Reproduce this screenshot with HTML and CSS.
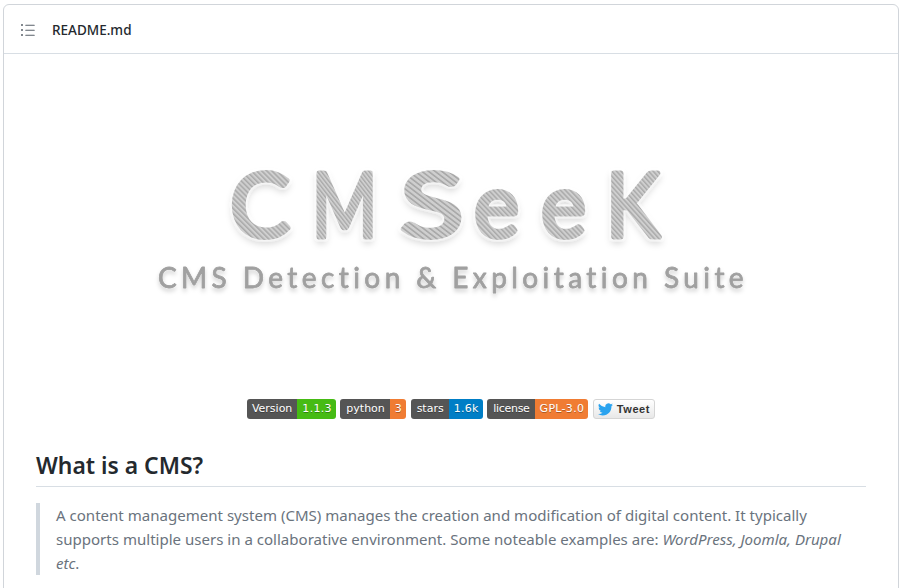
FILE: index.html
```html
<!DOCTYPE html>
<html lang="en">
<head>
<meta charset="utf-8">
<title>README.md</title>
<link rel="stylesheet" href="styles.css">
</head>
<body>
<div class="card">
  <header class="card-head">
    <svg class="list-icon" width="16" height="16" viewBox="0 0 16 16"><path d="M2 4a1 1 0 100-2 1 1 0 000 2zm3.750-1.250a.500.500 0 000 1h8.500a.500.500 0 000-1h-8.500zm0 5a.500.500 0 000 1h8.500a.500.500 0 000-1h-8.500zm0 5a.500.500 0 000 1h8.500a.500.500 0 000-1h-8.500zM3 8a1 1 0 11-2 0 1 1 0 012 0zm-1 6a1 1 0 100-2 1 1 0 000 2z"/></svg>
    <span class="file-name">README.md</span>
  </header>
  <article class="readme">
    <svg class="logo" width="830" height="290" viewBox="0 0 830 290">
      <defs>
        <pattern id="hatch" width="3.600" height="3.600" patternUnits="userSpaceOnUse" patternTransform="rotate(-45)">
          <rect width="3.600" height="3.600" fill="#cfcfcf"/>
          <rect width="1.500" height="3.600" fill="#a9a9a9"/>
        </pattern>
        <filter id="glow" x="-10%" y="-10%" width="120%" height="130%">
          <feDropShadow dx="0" dy="0" stdDeviation="1" flood-color="#fff"/>
          <feDropShadow dx="0" dy="4" stdDeviation="3" flood-color="#000" flood-opacity=".14"/>
        </filter>
        <filter id="soft" x="-5%" y="-30%" width="110%" height="170%">
          <feGaussianBlur stdDeviation=".55"/>
          <feDropShadow dx="0" dy="3" stdDeviation="2" flood-color="#000" flood-opacity=".18"/>
        </filter>
      </defs>
      <g filter="url(#glow)">
        <text class="logo-big" transform="translate(194 151)">C</text>
        <text class="logo-big" transform="translate(276 151) scale(.78 1)">M</text>
        <text class="logo-big" transform="translate(364 151) scale(1.3 1)">S</text>
        <text class="logo-big" transform="translate(438 151) scale(.95 1)">e</text>
        <text class="logo-big" transform="translate(505 151) scale(.95 1)">e</text>
        <text class="logo-big" transform="translate(570 151) scale(.9 1)">K</text>
      </g>
      <text class="logo-sub" filter="url(#soft)" x="122" y="202">CMS Detection &amp; Exploitation Suite</text>
    </svg>
    <p class="badges">
      <span class="badge"><span class="badge-key first">Version</span><span class="badge-val green">1.1.3</span></span>
      <span class="badge"><span class="badge-key">python</span><span class="badge-val orange">3</span></span>
      <span class="badge"><span class="badge-key">stars</span><span class="badge-val blue">1.6k</span></span>
      <span class="badge"><span class="badge-key tight">license</span><span class="badge-val orange">GPL-3.0</span></span>
      <span class="tweet">
        <svg width="15" height="13" viewBox="0 0 24 20"><path fill="#2aa3ef" d="M24 2.400a9.800 9.800 0 0 1-2.800.8A4.900 4.900 0 0 0 23.300.5a9.800 9.800 0 0 1-3.100 1.200 4.900 4.900 0 0 0-8.400 4.500A14 14 0 0 1 1.700.9a4.900 4.900 0 0 0 1.500 6.600 4.900 4.900 0 0 1-2.200-.6 4.900 4.900 0 0 0 3.900 4.900 4.900 4.900 0 0 1-2.200.1 4.900 4.900 0 0 0 4.600 3.400A9.900 9.900 0 0 1 0 17.300 14 14 0 0 0 7.500 19.500c9.100 0 14.300-7.700 14-14.600A10 10 0 0 0 24 2.400z"/></svg>
        Tweet
      </span>
    </p>
    <h2 class="section-title">What is a CMS?</h2>
    <blockquote class="quote">A content management system (CMS) manages the creation and modification of digital content. It typically supports multiple users in a collaborative environment. Some noteable examples are: <em>WordPress, Joomla, Drupal etc</em>.</blockquote>
  </article>
</div>
</body>
</html>
```

FILE: styles.css
```css
* { box-sizing: border-box; }
html, body { height: 100%; }
body {
  margin: 0;
  padding: 4px 4px 0 3px;
  overflow: hidden;
  background: #fff;
  color: #24292e;
  font-family: "Noto Sans", "Open Sans", sans-serif;
  font-size: 15.05px;
  line-height: 24px;
}
.card {
  border: 1px solid #d1d5da;
  border-radius: 6px;
  background: #fff;
}
.card-head {
  display: flex;
  align-items: center;
  height: 49px;
  padding: 1px 16px 0;
  border-bottom: 1px solid #d8dee4;
}
.list-icon { fill: #586069; margin-right: 16px; }
.file-name { font-size: 13.5px; font-weight: 500; }
.readme { padding: 32px 32px 40px; }
.logo { display: block; margin: 0 auto; }
.logo-big {
  font-family: "Lato", sans-serif;
  font-size: 90px;
  font-weight: 400;
  fill: url(#hatch);
  stroke: url(#hatch);
  stroke-width: 5px;
  stroke-linejoin: round;
  stroke-linecap: round;
}
.logo-sub {
  font-family: "Lato", sans-serif;
  font-size: 28px;
  font-weight: 400;
  letter-spacing: 4.42px;
  fill: #a0a0a0;
  stroke: #a0a0a0;
  stroke-width: .8px;
  stroke-linejoin: round;
}
.badges {
  display: flex;
  justify-content: center;
  gap: 4.5px;
  margin: 23px 0 0;
  height: 20px;
}
.badge {
  display: flex;
  height: 20px;
  border-radius: 3px;
  overflow: hidden;
  color: #fff;
  font-family: "DejaVu Sans", sans-serif;
  font-size: 11px;
  line-height: 20px;
  text-shadow: 0 1px rgba(1, 1, 1, .3);
}
.badge-key { background: #555; padding: 0 5px 0 6px; }
.first { padding-left: 5px; }
.tight { letter-spacing: -.3px; }
.badge-val { padding: 0 4px 0 5px; letter-spacing: .3px; }
.green { background: #46bb14; }
.orange { background: #f07c33; }
.blue { background: #007ec6; }
.tweet {
  display: flex;
  align-items: center;
  gap: 4px;
  height: 20px;
  padding: 0 4px;
  border: 1px solid #d5d5d5;
  border-radius: 3px;
  background: linear-gradient(#fff, #e8e8e8);
  color: #333;
  font-family: "Liberation Sans", sans-serif;
  font-size: 11px;
  font-weight: 700;
  letter-spacing: .6px;
}
.section-title {
  margin: 32px 0 16px;
  padding-bottom: 5px;
  border-bottom: 1px solid #d8dee4;
  font-size: 22.9px;
  font-weight: 600;
  line-height: 30px;
}
.quote {
  margin: 0;
  padding: 0 16px;
  border-left: 4px solid #d0d7de;
  color: #6a737d;
}
```
